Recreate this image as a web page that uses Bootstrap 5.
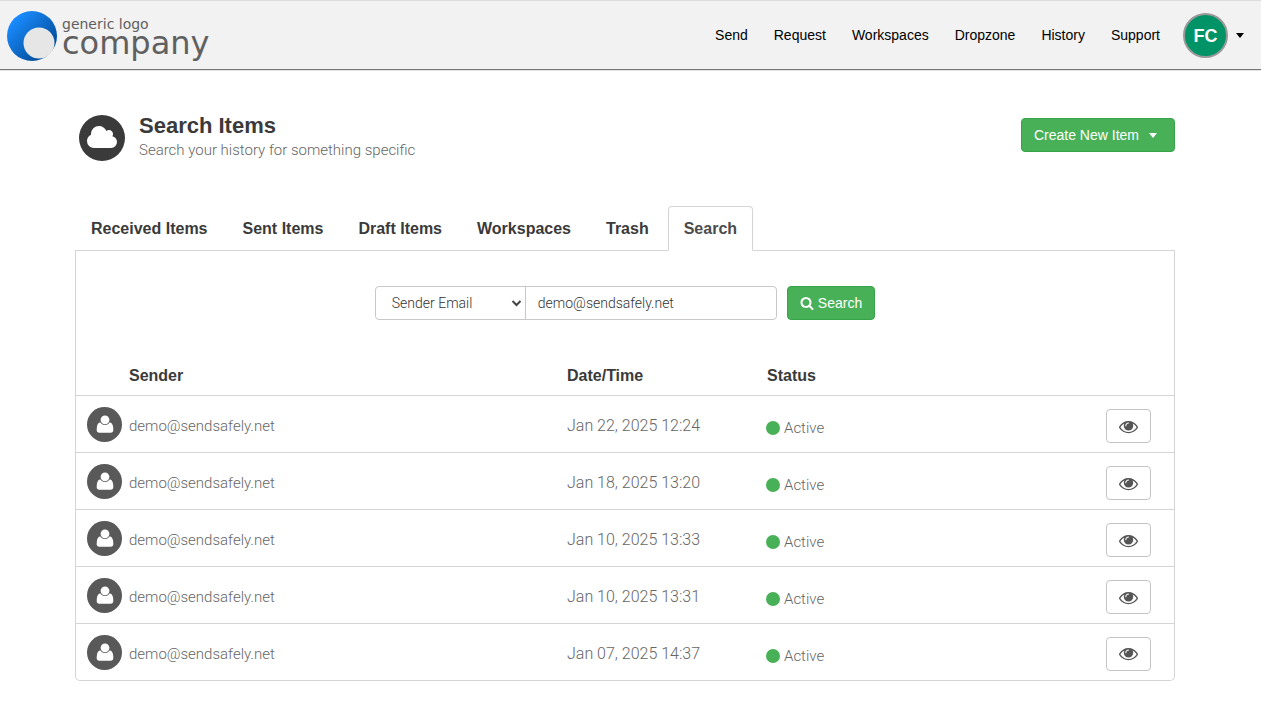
<!DOCTYPE html>
<html lang="en">
<head>
<meta charset="utf-8">
<meta name="viewport" content="width=device-width, initial-scale=1">
<title>Search Items</title>
<link href="https://cdn.jsdelivr.net/npm/bootstrap@5.3.0/dist/css/bootstrap.min.css" rel="stylesheet">
<style>
  :root { --line: #d5d5d5; --ink: #3a3a3a; --green: #48b158; --green-edge: #35a347; }
  body { font-family: "Liberation Sans", Arial, sans-serif; font-size: 14px; line-height: 20px; color: #555; background: #fff; }
  .thin { font-family: Roboto, "Helvetica Neue", sans-serif; font-weight: 300; font-size: 15px; line-height: 24px; color: #666; }

  .topbar { background: #f2f2f2; height: 70px; padding: 1px 17px 0 7px; border-top: 1px solid #ddd; border-bottom: 1px solid #777; box-shadow: 0 1px 0 #e4e4e4; }
  .brand { gap: 5px; font-family: "DejaVu Sans", sans-serif; color: #606060; text-decoration: none; }
  .brand-top { font-size: 14px; line-height: 14px; }
  .brand-main { font-size: 32px; line-height: 24px; }
  .topbar .nav-link { color: #000; padding: 8px 13px 10px; }
  .account { border: 0; background: none; padding: 0; gap: 8px; margin-left: 10px; color: #000; }
  .initials { width: 45px; height: 45px; border: 2px solid #999; background: #009365; color: #fff; font-size: 18px; font-weight: 700; }
  .arrow { width: 0; height: 0; border: 4px solid transparent; border-top: 5px solid currentColor; border-bottom: 0; }

  .page { padding: 44px 86px 31px 75px; }
  .page-mark { gap: 14px; }
  .disc { border-radius: 50%; color: #fff; flex: none; }
  .disc-lg { width: 46px; height: 46px; background: var(--ink); }
  .disc-sm { width: 35px; height: 35px; background: #595959; }
  .page-title { font-size: 22px; line-height: 24px; font-weight: 700; color: var(--ink); margin: 0; }

  .btn { font-size: 14px; line-height: 20px; padding: 6px 12px; border-radius: 4px; }
  .btn-go { --bs-btn-color: #fff; --bs-btn-bg: var(--green); --bs-btn-border-color: var(--green-edge); --bs-btn-hover-color: #fff; --bs-btn-hover-bg: #3fa04e; --bs-btn-hover-border-color: #2f9140; }
  .btn-create { gap: 10px; padding-right: 17px; margin-bottom: 6px; }
  .btn-view { --bs-btn-border-color: #c4c4c4; --bs-btn-color: #555; --bs-btn-hover-border-color: #aaa; width: 45px; height: 34px; padding: 0; }

  .section-tabs { --bs-nav-tabs-border-color: var(--line); gap: 3px; margin-top: 44px; }
  .section-tabs .nav-link { font-size: 16px; line-height: 24px; font-weight: 700; padding: 10px 15px 9px; border-radius: 4px 4px 0 0; color: var(--ink); }
  .section-tabs .nav-link.active { color: #4c4c4c; border-color: var(--line) var(--line) #fff; }
  .panel { border: 1px solid var(--line); border-top: 0; border-radius: 0 0 5px 5px; }

  .finder { gap: 10px; padding: 35px 0 36px; }
  .finder .input-group { width: 402px; }
  .finder .form-select, .finder .form-control { font-family: Roboto, sans-serif; font-weight: 300; font-size: 14px; line-height: 20px; height: 34px; border-color: #c8c8c8; border-radius: 4px; color: #333; }
  .finder .form-select { flex: 0 0 151px; padding: 6px 16px; background-position: right 3px center; background-size: 11px; border-top-right-radius: 0; border-bottom-right-radius: 0;
    background-image: url("data:image/svg+xml,%3Csvg xmlns='http://www.w3.org/2000/svg' viewBox='0 0 11 8'%3E%3Cpath fill='none' stroke='%23444' stroke-width='2' d='M1.5 2l4 4 4-4'/%3E%3C/svg%3E"); }
  .finder .form-control { padding: 6px 12px; border-top-left-radius: 0; border-bottom-left-radius: 0; }

  .items { --bs-table-bg: transparent; margin: 0; }
  .items th { font-size: 16px; line-height: 24px; color: var(--ink); padding: 8px 8px 7px; border-color: var(--line); }
  .items td { height: 57px; padding: 0 8px; vertical-align: middle; border-color: var(--line); }
  .items tr:last-child td { height: 56px; border-bottom: 0; }
  .items .col-pic { width: 46px; padding: 0 0 0 11px; }
  .items .col-who { padding-left: 7px; }
  .items .col-when, .items .col-state { width: 200px; }
  .items td.col-when { font-size: 16px; }
  .items .col-act { width: 215px; padding-right: 23px; text-align: right; }
  .items td.col-act { padding-top: 4px; }
  .items td.col-state { padding-top: 8px; }
  .items td.col-who, .items td.col-when { padding-top: 4px; }
  .items tr:last-child .col-pic { padding-top: 1px; }
  .dot { width: 14px; height: 14px; border-radius: 50%; background: var(--green); margin: 0 4px 0 -1px; }
  svg { display: block; fill: currentColor; }
</style>
</head>
<body>
<svg class="d-none" aria-hidden="true">
  <symbol id="i-user" viewBox="0 0 18 18"><path d="M4.500 7.500h9c2.500 0 3.800 2.500 3.800 7.500 0 1.700-1 2.800-2.600 2.800H3.300C1.700 17.800.7 16.700.7 15c0-5 1.300-7.500 3.800-7.500z"/><circle cx="9" cy="4.800" r="5.200" fill="#595959"/><circle cx="9" cy="4.800" r="4.400"/></symbol>
  <symbol id="i-eye" viewBox="0 0 1792 1792"><path d="M1664 960q-152-236-381-353 61 104 61 225 0 185-131.500 316.500t-316.500 131.500-316.500-131.500-131.500-316.500q0-121 61-225-229 117-381 353 133 205 333.500 326.500t434.500 121.500 434.500-121.500 333.500-326.500zm-720-384q0-20-14-34t-34-14q-125 0-214.500 89.500t-89.500 214.500q0 20 14 34t34 14 34-14 14-34q0-86 61-147t147-61q20 0 34-14t14-34zm848 384q0 34-20 69-140 230-376.500 368.500t-499.500 138.500-499.500-139-376.500-368q-20-35-20-69t20-69q140-229 376.500-368t499.500-139 499.500 139 376.500 368q20 35 20 69z"/></symbol>
</svg>

<header class="topbar d-flex align-items-center justify-content-between">
  <a class="brand d-flex align-items-center" href="#">
    <svg width="50" height="50" viewBox="0 0 50 50" aria-hidden="true">
      <defs><linearGradient id="ball" x1="0.150" y1="0.150" x2="0.850" y2="0.850"><stop offset="0" stop-color="#1a8cff"/><stop offset="1" stop-color="#004a94"/></linearGradient></defs>
      <circle cx="25" cy="25" r="25" fill="url(#ball)"/><circle cx="32" cy="32" r="15.500" fill="#e6e6e6"/>
    </svg>
    <span class="d-flex flex-column"><span class="brand-top">generic logo</span><span class="brand-main">company</span></span>
  </a>
  <nav class="d-flex align-items-center">
    <a class="nav-link" href="#">Send</a>
    <a class="nav-link" href="#">Request</a>
    <a class="nav-link" href="#">Workspaces</a>
    <a class="nav-link" href="#">Dropzone</a>
    <a class="nav-link" href="#">History</a>
    <a class="nav-link" href="#">Support</a>
    <button class="account d-flex align-items-center" type="button" aria-label="Account menu">
      <span class="initials rounded-circle d-flex align-items-center justify-content-center">FC</span><span class="arrow"></span>
    </button>
  </nav>
</header>

<main class="page">
  <div class="d-flex align-items-center justify-content-between">
    <div class="page-mark d-flex align-items-center ps-1">
      <span class="disc disc-lg d-flex align-items-center justify-content-center"><svg width="32" height="28" viewBox="0 0 2048 1792" aria-hidden="true"><path d="M1984 1152q0 159-112.500 271.500t-271.500 112.500h-1088q-185 0-316.500-131.500t-131.500-316.500q0-132 71-241.500t187-163.500q-2-28-2-43 0-212 150-362t362-150q158 0 286.500 88t187.500 230q70-62 166-62 106 0 181 75t75 181q0 75-41 138 129 30 213 134.500t84 239.500z"/></svg></span>
      <div>
        <h1 class="page-title">Search Items</h1>
        <div class="thin">Search your history for something specific</div>
      </div>
    </div>
    <button class="btn btn-go btn-create d-flex align-items-center" type="button">Create New Item <span class="arrow"></span></button>
  </div>

  <ul class="nav nav-tabs section-tabs">
    <li class="nav-item"><a class="nav-link" href="#">Received Items</a></li>
    <li class="nav-item"><a class="nav-link" href="#">Sent Items</a></li>
    <li class="nav-item"><a class="nav-link" href="#">Draft Items</a></li>
    <li class="nav-item"><a class="nav-link" href="#">Workspaces</a></li>
    <li class="nav-item"><a class="nav-link" href="#">Trash</a></li>
    <li class="nav-item"><a class="nav-link active" aria-current="page" href="#">Search</a></li>
  </ul>

  <section class="panel">
    <form class="finder d-flex justify-content-center">
      <div class="input-group">
        <select class="form-select" id="field" aria-label="Search by"><option>Sender Email</option></select>
        <input class="form-control" id="term" type="text" aria-label="Search term" value="demo@sendsafely.net">
      </div>
      <button class="btn btn-go d-flex align-items-center gap-1" type="button"><svg width="14" height="14" viewBox="0 0 1792 1792" aria-hidden="true"><path d="M1216 832q0-185-131.500-316.500t-316.500-131.500-316.500 131.500-131.500 316.500 131.500 316.500 316.500 131.500 316.500-131.500 131.500-316.500zm512 832q0 52-38 90t-90 38q-54 0-90-38l-343-342q-179 124-399 124-143 0-273.500-55.500t-225-150-150-225-55.500-273.500 55.500-273.500 150-225 225-150 273.500-55.500 273.500 55.500 225 150 150 225 55.500 273.500q0 220-124 399l343 343q37 37 37 90z"/></svg>Search</button>
    </form>

    <table class="table items">
      <thead>
        <tr><th class="col-pic"></th><th class="col-who">Sender</th><th class="col-when">Date/Time</th><th class="col-state">Status</th><th class="col-act"></th></tr>
      </thead>
      <tbody>
        <tr><td class="col-pic"><span class="disc disc-sm d-flex align-items-center justify-content-center"><svg width="18" height="18" aria-hidden="true"><use href="#i-user"/></svg></span></td><td class="col-who thin">demo@sendsafely.net</td><td class="col-when thin">Jan 22, 2025 12:24</td><td class="col-state thin"><span class="d-flex align-items-center"><span class="dot"></span>Active</span></td><td class="col-act"><button class="btn btn-view d-inline-flex align-items-center justify-content-center" type="button" aria-label="View"><svg width="19" height="19" aria-hidden="true"><use href="#i-eye"/></svg></button></td></tr>
        <tr><td class="col-pic"><span class="disc disc-sm d-flex align-items-center justify-content-center"><svg width="18" height="18" aria-hidden="true"><use href="#i-user"/></svg></span></td><td class="col-who thin">demo@sendsafely.net</td><td class="col-when thin">Jan 18, 2025 13:20</td><td class="col-state thin"><span class="d-flex align-items-center"><span class="dot"></span>Active</span></td><td class="col-act"><button class="btn btn-view d-inline-flex align-items-center justify-content-center" type="button" aria-label="View"><svg width="19" height="19" aria-hidden="true"><use href="#i-eye"/></svg></button></td></tr>
        <tr><td class="col-pic"><span class="disc disc-sm d-flex align-items-center justify-content-center"><svg width="18" height="18" aria-hidden="true"><use href="#i-user"/></svg></span></td><td class="col-who thin">demo@sendsafely.net</td><td class="col-when thin">Jan 10, 2025 13:33</td><td class="col-state thin"><span class="d-flex align-items-center"><span class="dot"></span>Active</span></td><td class="col-act"><button class="btn btn-view d-inline-flex align-items-center justify-content-center" type="button" aria-label="View"><svg width="19" height="19" aria-hidden="true"><use href="#i-eye"/></svg></button></td></tr>
        <tr><td class="col-pic"><span class="disc disc-sm d-flex align-items-center justify-content-center"><svg width="18" height="18" aria-hidden="true"><use href="#i-user"/></svg></span></td><td class="col-who thin">demo@sendsafely.net</td><td class="col-when thin">Jan 10, 2025 13:31</td><td class="col-state thin"><span class="d-flex align-items-center"><span class="dot"></span>Active</span></td><td class="col-act"><button class="btn btn-view d-inline-flex align-items-center justify-content-center" type="button" aria-label="View"><svg width="19" height="19" aria-hidden="true"><use href="#i-eye"/></svg></button></td></tr>
        <tr><td class="col-pic"><span class="disc disc-sm d-flex align-items-center justify-content-center"><svg width="18" height="18" aria-hidden="true"><use href="#i-user"/></svg></span></td><td class="col-who thin">demo@sendsafely.net</td><td class="col-when thin">Jan 07, 2025 14:37</td><td class="col-state thin"><span class="d-flex align-items-center"><span class="dot"></span>Active</span></td><td class="col-act"><button class="btn btn-view d-inline-flex align-items-center justify-content-center" type="button" aria-label="View"><svg width="19" height="19" aria-hidden="true"><use href="#i-eye"/></svg></button></td></tr>
      </tbody>
    </table>
  </section>
</main>
<script src="https://cdn.jsdelivr.net/npm/bootstrap@5.3.0/dist/js/bootstrap.bundle.min.js"></script>
</body>
</html>
